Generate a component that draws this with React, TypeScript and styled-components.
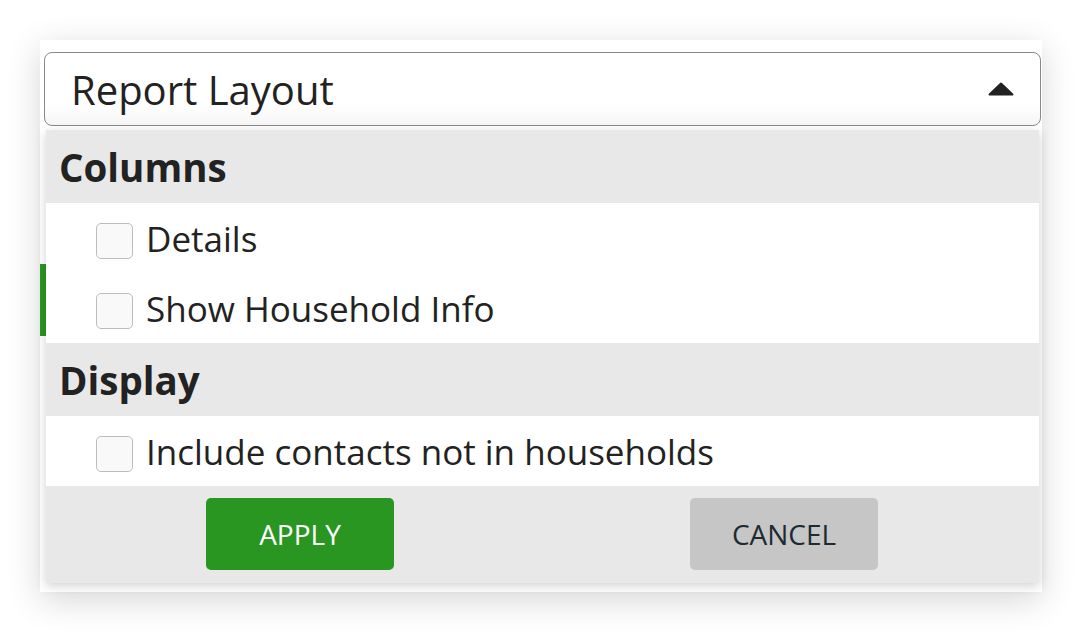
import React from "react";
import styled, { createGlobalStyle } from "styled-components";

const GlobalStyle = createGlobalStyle`
  html, body {
    margin: 0;
    background: #ffffff;
    font-family: "Open Sans", "Noto Sans", "Liberation Sans", sans-serif;
    color: #222222;
  }
`;

const Page = styled.div`
  padding: 40px;
`;

const Panel = styled.div`
  position: relative;
  width: 1002px;
  height: 552px;
  box-sizing: border-box;
  padding-top: 12px;
  background: #ffffff;
  box-shadow: 0 8px 32px rgba(0, 0, 0, 0.16);
`;

const Accent = styled.div`
  position: absolute;
  left: 0;
  top: 224px;
  width: 6px;
  height: 72px;
  background: #2a9622;
`;

const Select = styled.div`
  display: flex;
  align-items: center;
  justify-content: space-between;
  box-sizing: border-box;
  margin-left: 4px;
  width: 997px;
  height: 74px;
  padding: 0 26px 0 26px;
  border: 1.5px solid #888888;
  border-radius: 8px;
  background: linear-gradient(#ffffff 70%, #f6f6f6);
  font-size: 40px;
  color: #222222;
`;

const Dropdown = styled.div`
  position: relative;
  margin: 4px 0 0 6px;
  width: 993px;
  box-shadow: 0 3px 10px rgba(0, 0, 0, 0.18);
`;

const SectionHeader = styled.div`
  display: flex;
  align-items: center;
  height: 73px;
  padding-left: 13px;
  background: #e8e8e8;
  font-size: 38.5px;
  font-weight: 700;
  color: #222222;
`;

const Row = styled.label`
  display: flex;
  align-items: center;
  gap: 13px;
  height: 70px;
  padding-left: 50px;
  background: #ffffff;
  font-size: 35px;
  color: #222222;
`;

const Box = styled.span`
  box-sizing: border-box;
  width: 37px;
  height: 36px;
  margin-top: 5px;
  border: 1.5px solid #bdbdbd;
  border-radius: 5px;
  background: #f9f9f9;
`;

const Footer = styled.div`
  display: grid;
  grid-template-columns: 1fr 1fr;
  justify-items: center;
  height: 97px;
  box-sizing: border-box;
  padding: 12px 13px 0 12px;
  background: #e8e8e8;
`;

const Button = styled.button<{ $primary?: boolean }>`
  width: 188px;
  height: 72px;
  border: none;
  border-radius: 5px;
  font-family: inherit;
  font-size: 28px;
  cursor: pointer;
  background: ${(p) => (p.$primary ? "#2a9622" : "#c6c6c6")};
  color: ${(p) => (p.$primary ? "#ffffff" : "#1c2b33")};
`;

const Caret = () => (
  <svg width="26" height="14" viewBox="0 0 26 14">
    <path d="M13 1.5 L24.5 12.5 L1.5 12.5 Z" fill="#222" stroke="#222" strokeWidth="2" strokeLinejoin="round" />
  </svg>
);

const Check = ({ label }: { label: string }) => (
  <Row>
    <Box />
    {label}
  </Row>
);

export default function App() {
  return (
    <Page>
      <GlobalStyle />
      <Panel>
        <Accent />
        <Select>
          <span>Report Layout</span>
          <Caret />
        </Select>
        <Dropdown>
          <SectionHeader>Columns</SectionHeader>
          <Check label="Details" />
          <Check label="Show Household Info" />
          <SectionHeader>Display</SectionHeader>
          <Check label="Include contacts not in households" />
          <Footer>
            <Button $primary>APPLY</Button>
            <Button>CANCEL</Button>
          </Footer>
        </Dropdown>
      </Panel>
    </Page>
  );
}
